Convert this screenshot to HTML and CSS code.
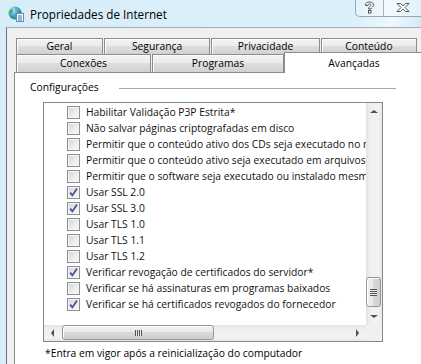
FILE: index.html
```html
<!DOCTYPE html>
<html lang="pt-BR">
<head>
  <meta charset="UTF-8">
  <meta name="viewport" content="width=device-width, initial-scale=1.0">
  <title>Propriedades de Internet</title>
  <link rel="stylesheet" href="styles.css">
</head>
<body>
  <div class="window">
    <!-- barra de título -->
    <div class="titlebar">
      <svg class="app-icon" width="16" height="16" viewBox="0 0 16 16">
        <defs>
          <radialGradient id="globe" cx="0.35" cy="0.3" r="0.8">
            <stop offset="0" stop-color="#bfe6ff"/>
            <stop offset="0.6" stop-color="#2f8fd8"/>
            <stop offset="1" stop-color="#1b5aa6"/>
          </radialGradient>
        </defs>
        <circle cx="7" cy="7" r="6.5" fill="url(#globe)"/>
        <path d="M3 3.5c1.5-.5 2.5.5 2 2s-1.5 1-2 2.5S2.5 9 1.5 8C1 6 1.8 4.3 3 3.5z" fill="#4db33d"/>
        <path d="M8 2c1.5.2 3 1 3.5 2.5-1 .3-1.8-.2-2.5.5S7.5 5 7.2 3.8 7.3 2.2 8 2z" fill="#5ec04a"/>
        <path d="M6 9.5c1-.3 2 .3 1.8 1.5S6.5 13 5.8 12.5 5.3 10 6 9.5z" fill="#4db33d"/>
        <rect x="8.5" y="7.5" width="7" height="8" fill="#fff" stroke="#6d8bb0"/>
        <path d="M10 10h4M10 12h4M10 14h4" stroke="#2c6cc0"/>
      </svg>
      <span class="title">Propriedades de Internet</span>
      <div class="caption-buttons">
        <span class="cap-btn cap-help">
          <svg width="11" height="13" viewBox="0 0 11 13">
            <path d="M1.5 4.5C1.5 2 3 1 5.5 1S9.5 2.2 9.5 4c0 2-2.5 2.4-2.5 4H4.5c0-2.5 2.5-2.8 2.5-4 0-.8-.6-1.2-1.5-1.2S4 3.3 4 4.5z" fill="#fff" stroke="#555" stroke-linejoin="round"/>
            <rect x="4.5" y="9.5" width="2.5" height="2.5" fill="#fff" stroke="#555"/>
          </svg>
        </span>
        <span class="cap-btn cap-close">
          <svg width="14" height="11" viewBox="0 0 14 11">
            <path d="M1 1.5h3.5L7 4l2.5-2.5H13L9 5.5l4 4H9.5L7 7 4.5 9.5H1l4-4z" fill="#fff" stroke="#555" stroke-linejoin="round"/>
          </svg>
        </span>
      </div>
    </div>

    <div class="frame">
      <div class="dialog">
        <!-- abas -->
        <div class="tab-row tab-row-back">
          <div class="tab tab-geral">Geral</div>
          <div class="tab tab-seguranca">Segurança</div>
          <div class="tab tab-privacidade">Privacidade</div>
          <div class="tab tab-conteudo">Conteúdo</div>
        </div>
        <div class="tab-row tab-row-front">
          <div class="tab tab-conexoes">Conexões</div>
          <div class="tab tab-programas">Programas</div>
          <div class="tab tab-selected">Avançadas</div>
        </div>

        <div class="panel">
          <div class="group-head">
            <span class="group-label">Configurações</span>
            <span class="group-line"></span>
          </div>

          <div class="listbox">
            <div class="list-content">
              <div class="item"><span class="cb"></span>Habilitar Validação P3P Estrita*</div>
              <div class="item"><span class="cb"></span>Não salvar páginas criptografadas em disco</div>
              <div class="item"><span class="cb"></span>Permitir que o conteúdo ativo dos CDs seja executado no meu computador</div>
              <div class="item"><span class="cb"></span>Permitir que o conteúdo ativo seja executado em arquivos no meu computador</div>
              <div class="item"><span class="cb"></span>Permitir que o software seja executado ou instalado mesmo que a assinatura seja inválida</div>
              <div class="item"><span class="cb checked"></span>Usar SSL 2.0</div>
              <div class="item"><span class="cb checked"></span>Usar SSL 3.0</div>
              <div class="item"><span class="cb"></span>Usar TLS 1.0</div>
              <div class="item"><span class="cb"></span>Usar TLS 1.1</div>
              <div class="item"><span class="cb"></span>Usar TLS 1.2</div>
              <div class="item"><span class="cb checked"></span>Verificar revogação de certificados do servidor*</div>
              <div class="item"><span class="cb"></span>Verificar se há assinaturas em programas baixados</div>
              <div class="item"><span class="cb checked"></span>Verificar se há certificados revogados do fornecedor</div>
            </div>

            <!-- barra de rolagem vertical -->
            <div class="vscroll">
              <span class="sb-btn"><span class="arrow arrow-up"></span></span>
              <span class="sb-track">
                <span class="thumb thumb-v"></span>
              </span>
              <span class="sb-btn"><span class="arrow arrow-down"></span></span>
            </div>

            <!-- barra de rolagem horizontal -->
            <div class="hscroll">
              <span class="sb-btn"><span class="arrow arrow-left"></span></span>
              <span class="sb-track">
                <span class="thumb thumb-h"></span>
              </span>
              <span class="sb-btn"><span class="arrow arrow-right"></span></span>
            </div>
            <div class="sb-corner"></div>
          </div>

          <p class="note">*Entra em vigor após a reinicialização do computador</p>
        </div>
      </div>
    </div>
  </div>

  <script>
    // marca de seleção nas caixas marcadas
    document.querySelectorAll('.cb.checked').forEach(function (box) {
      box.innerHTML = '<svg width="11" height="11" viewBox="0 0 11 11"><path d="M2.2 5.6l2.2 2.8L9 1.6" fill="none" stroke="#3c5290" stroke-width="1.7"/></svg>';
    });
  </script>
</body>
</html>
```

FILE: styles.css
```css
body {
  margin: 0;
  padding: 0;
  font-family: 'Open Sans', 'Noto Sans', sans-serif;
  color: #000;
  background: #dbeff8;
}
.window {
  width: 421px;
  height: 364px;
  overflow: hidden;
  background: linear-gradient(90deg, #d7edf8 0%, #dcf0f9 85%, #eef8fd 93%, #d5ebf7 100%);
}

/* barra de título */
.titlebar {
  display: flex;
  align-items: center;
  height: 27px;
  padding-left: 8px;
  box-sizing: border-box;
}
.app-icon {
  margin-right: 6px;
  flex: none;
}
.title {
  font-size: 11.7px;
  line-height: 16px;
}
.caption-buttons {
  display: flex;
  align-self: flex-start;
  margin-left: auto;
  margin-top: -1px;
  margin-right: -10px;
  height: 17px;
  border: 1px solid #98a6b2;
  border-top: none;
  border-radius: 0 0 0 5px;
  background: rgba(255, 255, 255, 0.25);
}
.cap-btn {
  display: flex;
  align-items: center;
  justify-content: center;
}
.cap-help {
  width: 27px;
  border-right: 1px solid #a9b6c0;
}
.cap-close {
  width: 46px;
  justify-content: flex-start;
  padding-left: 12px;
  box-sizing: border-box;
}

/* área do diálogo */
.frame {
  padding-left: 6px;
  height: 337px;
}
.dialog {
  height: 100%;
  background: #f0f0f0;
  border-left: 1px solid #66717c;
  border-top: 1px solid #a3adb7;
  padding: 10px 0 0 7px;
  box-sizing: border-box;
  font-size: 10.3px;
}

/* abas */
.tab-row {
  display: flex;
  padding-left: 2px;
}
.tab-row-front {
  align-items: flex-end;
  height: 18px;
}
.tab {
  flex: none;
  box-sizing: border-box;
  border: 1px solid #898c95;
  border-bottom: none;
  margin-right: 1px;
  text-align: center;
  background: linear-gradient(#f3f3f3, #ebebeb 50%, #dedede 50%, #d1d1d1);
  box-shadow: inset 1px 1px 0 #fcfcfc;
}
.tab-row-back .tab {
  height: 16px;
  line-height: 15px;
}
.tab-row-front .tab {
  height: 18px;
  line-height: 15px;
  padding-top: 1px;
}
.tab-geral { width: 87px; }
.tab-seguranca { width: 106px; }
.tab-privacidade { width: 109px; }
.tab-conteudo { width: 96px; }
.tab-conexoes { width: 135px; }
.tab-programas { width: 132px; margin-right: 0; }
.tab-row-front .tab-selected {
  width: 140px;
  height: 21px;
  margin-top: -2px;
  margin-bottom: -1px;
  padding-top: 3px;
  background: #fff;
  box-shadow: none;
  position: relative;
  z-index: 1;
}

/* painel Avançadas */
.panel {
  width: 420px;
  height: 300px;
  box-sizing: border-box;
  background: #fff;
  border: 1px solid #898c95;
  padding-top: 7px;
}
.group-head {
  display: flex;
  align-items: center;
  margin-left: 15px;
  width: 366px;
  height: 15px;
}
.group-label {
  line-height: 15px;
}
.group-line {
  flex: 1;
  margin-left: 20px;
  border-top: 1px solid #a8a8a8;
  margin-top: 1px;
}

.listbox {
  display: grid;
  grid-template-columns: 322px 16px;
  grid-template-rows: 222px 16px;
  width: 340px;
  box-sizing: border-box;
  margin: 7px 0 0 28px;
  border: 1px solid #828790;
}
.list-content {
  overflow: hidden;
  padding-top: 1px;
}
.item {
  display: flex;
  align-items: center;
  height: 16px;
  padding-left: 23px;
  white-space: nowrap;
  color: #111;
}
.cb {
  flex: none;
  width: 13px;
  height: 13px;
  box-sizing: border-box;
  margin-right: 6px;
  border: 1px solid #8e8f8f;
  background: linear-gradient(135deg, #cfd2d6, #eeeeee 60%, #f7f7f7);
  box-shadow: inset 0 0 0 1px #f6f6f6;
  display: flex;
  align-items: center;
  justify-content: center;
}

/* barras de rolagem */
.vscroll {
  display: flex;
  flex-direction: column;
  background: linear-gradient(90deg, #e3e3e3, #efefef 25%, #f3f3f3 75%, #e8e8e8);
}
.hscroll {
  display: flex;
  background: linear-gradient(#e3e3e3, #efefef 25%, #f3f3f3 75%, #e8e8e8);
}
.sb-btn {
  flex: none;
  width: 16px;
  height: 17px;
  display: flex;
  align-items: center;
  justify-content: center;
}
.hscroll .sb-btn {
  width: 17px;
  height: 16px;
}
.sb-track {
  flex: 1;
  display: flex;
}
.vscroll .sb-track {
  flex-direction: column;
  justify-content: flex-end;
  padding-bottom: 1px;
}
.hscroll .sb-track {
  padding-left: 1px;
}
.thumb {
  box-sizing: border-box;
  border: 1px solid #959595;
  border-radius: 3px;
  display: flex;
  align-items: center;
  justify-content: center;
}
.thumb-v {
  height: 30px;
  margin: 0 1px 0 0;
  background: linear-gradient(90deg, #f2f2f2, #e8e8e8 50%, #d9d9d9 50%, #cfcfcf);
  box-shadow: inset 1px 1px 0 #fff;
}
.thumb-v::after {
  content: '';
  width: 7px;
  height: 7px;
  background: repeating-linear-gradient(#555 0 1px, #e9e9e9 1px 2px);
}
.thumb-h {
  width: 152px;
  height: 15px;
  margin-top: 0;
  background: linear-gradient(#f2f2f2, #e8e8e8 50%, #d9d9d9 50%, #cfcfcf);
  box-shadow: inset 1px 1px 0 #fff;
}
.thumb-h::after {
  content: '';
  width: 7px;
  height: 6px;
  background: repeating-linear-gradient(90deg, #555 0 1px, #e9e9e9 1px 2px);
}
.sb-corner {
  background: #f0f0f0;
}
.arrow {
  width: 0;
  height: 0;
  border: 3px solid transparent;
}
.arrow-up {
  border-bottom: 3px solid #505050;
  border-top: none;
  border-left-width: 4px;
  border-right-width: 4px;
}
.arrow-down {
  border-top: 3px solid #505050;
  border-bottom: none;
  border-left-width: 4px;
  border-right-width: 4px;
}
.arrow-left {
  border-right: 3px solid #505050;
  border-left: none;
  border-top-width: 4px;
  border-bottom-width: 4px;
}
.arrow-right {
  border-left: 3px solid #505050;
  border-right: none;
  border-top-width: 4px;
  border-bottom-width: 4px;
}

.note {
  margin: 4px 0 0 30px;
  line-height: 15px;
  white-space: nowrap;
}
```
